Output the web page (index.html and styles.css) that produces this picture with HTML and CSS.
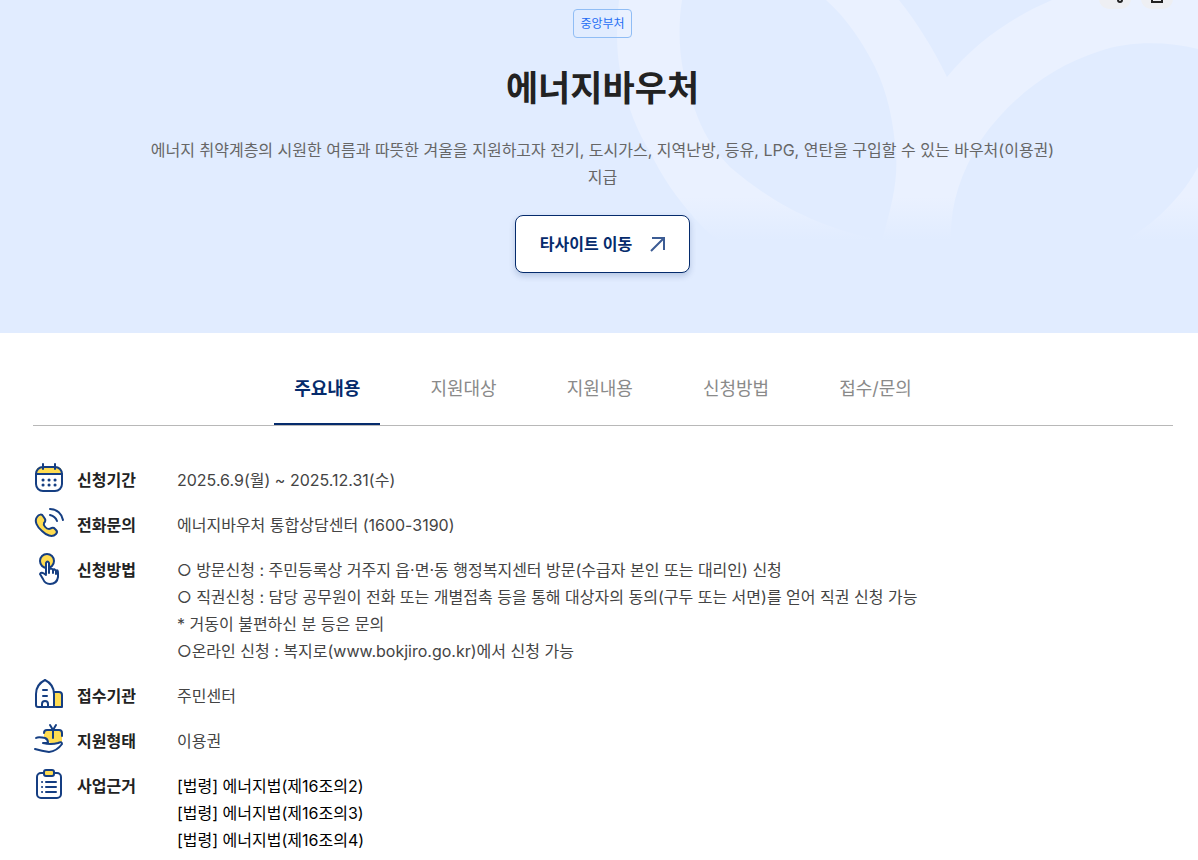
FILE: index.html
```html
<!DOCTYPE html>
<html lang="ko">
<head>
  <meta charset="UTF-8" />
  <meta name="viewport" content="width=device-width, initial-scale=1.0"/>
  <title>에너지바우처</title>
  <link rel="stylesheet" href="styles.css">
</head>
<body>
  <header class="hero">
    <svg class="hero-pattern" viewBox="0 0 598 240" aria-hidden="true">
      <defs>
        <linearGradient id="fade" x1="0" y1="0" x2="0" y2="240" gradientUnits="userSpaceOnUse">
          <stop offset="0" stop-color="#eaf1ff"/>
          <stop offset="0.82" stop-color="#eaf1ff"/>
          <stop offset="1" stop-color="#e1ecff"/>
        </linearGradient>
      </defs>
      <path fill="url(#fade)" d="M19 0C16 32 16 58 23 83C28 108 37 131 50 152C61 175 76 197 92 215C100 225 109 234 118 240H282C220 229 172 203 130 167C111 147 102 130 95 110C81 77 76 38 82 0Z"/>
      <path fill="url(#fade)" d="M226 0H299C318 24 334 50 347 77C375 43 410 18 452 0H598V49C567 41 528 41 500 51C449 67 408 101 381 140C360 174 350 205 351 240H282C292 205 298 180 296 153C293 120 288 94 275 67C262 41 247 19 226 0Z"/>
      <path fill="url(#fade)" d="M598 167Q588 186 572 203Q552 225 526 240H598Z"/>
    </svg>

    <div class="hero-actions">
      <button type="button" aria-label="공유">
        <svg width="20" height="20" viewBox="0 0 20 20"><circle cx="15" cy="4" r="2"/><circle cx="4" cy="10" r="2"/><circle cx="15" cy="17" r="2"/><path d="M6 9L13 5M6 11L13 16"/></svg>
      </button>
      <button type="button" aria-label="인쇄">
        <svg width="20" height="20" viewBox="0 0 20 20"><path d="M5 6V2H15V6M5 14H2V6H18V14H15M5 11H15V19H5Z"/></svg>
      </button>
    </div>

    <span class="badge">중앙부처</span>
    <h1>에너지바우처</h1>
    <p class="desc">에너지 취약계층의 시원한 여름과 따뜻한 겨울을 지원하고자 전기, 도시가스, 지역난방, 등유, LPG, 연탄을 구입할 수 있는 바우처(이용권) 지급</p>
    <button type="button" class="btn-site">
      타사이트 이동
      <svg width="16" height="16" viewBox="0 0 16 16" aria-hidden="true"><path d="M2 2H14V14M14 2L1 15"/></svg>
    </button>
  </header>

  <main class="content">
    <nav class="tabs">
      <a href="#main" class="active">주요내용</a>
      <a href="#target">지원대상</a>
      <a href="#support">지원내용</a>
      <a href="#apply">신청방법</a>
      <a href="#contact">접수/문의</a>
    </nav>

    <dl class="info" id="main">
      <div class="row">
        <dt>
          <svg class="icon" viewBox="0 0 30 30" aria-hidden="true">
            <path class="fill" d="M2 11V9Q2 4 7 4H23Q28 4 28 9V11Z"/>
            <rect x="2" y="4" width="26" height="24" rx="7"/>
            <path d="M2 11H28M9 1V6M21 1V6"/>
            <path class="dots" d="M9 17H9.1M15 17H15.1M21 17H21.1M9 22H9.1M15 22H15.1M21 22H21.1"/>
          </svg>
          신청기간
        </dt>
        <dd>2025.6.9(월) ~ 2025.12.31(수)</dd>
      </div>
      <div class="row">
        <dt>
          <svg class="icon" viewBox="0 0 30 30" aria-hidden="true">
            <path class="fill line" d="M3 9C5 6 8 6 9 8L11 11C12 13 11 14 10 15C9 17 12 21 15 21C17 21 17 19 20 20L22 22C24 24 23 25 22 26C18 30 12 27 8 23C3 19 0 13 3 9Z"/>
            <path d="M16 1C23 1 28 6 29 12M16 7C20 8 22 10 23 13"/>
          </svg>
          전화문의
        </dt>
        <dd>에너지바우처 통합상담센터 (1600-3190)</dd>
      </div>
      <div class="row">
        <dt>
          <svg class="icon" viewBox="0 0 30 30" aria-hidden="true">
            <circle class="fill line" cx="13" cy="8" r="7"/>
            <path class="hand" d="M12 21V10Q13.5 7 15 10V17Q17 14 19 17Q20 15 22 18Q24 16 24 20V24Q23 31 16 31Q11 31 9 26L6 21Q7 18 12 22M15 16V20M19 17V20M22 18V21"/>
          </svg>
          신청방법
        </dt>
        <dd>
          ○ 방문신청 : 주민등록상 거주지 읍·면·동 행정복지센터 방문(수급자 본인 또는 대리인) 신청<br>
          ○ 직권신청 : 담당 공무원이 전화 또는 개별접촉 등을 통해 대상자의 동의(구두 또는 서면)를 얻어 직권 신청 가능<br>
          * 거동이 불편하신 분 등은 문의<br>
          ○온라인 신청 : 복지로(www.bokjiro.go.kr)에서 신청 가능
        </dd>
      </div>
      <div class="row">
        <dt>
          <svg class="icon" viewBox="0 0 30 30" aria-hidden="true">
            <path class="fill line" d="M19 13H25Q28 13 28 16V28H19Z"/>
            <path class="paper" d="M4 28Q2 28 2 26V15C2 8 5 4 11 1C17 4 20 8 20 15V28Z"/>
            <path d="M8 28V25C8 21 14 21 14 25V28M9 11H13M9 17H13"/>
          </svg>
          접수기관
        </dt>
        <dd>주민센터</dd>
      </div>
      <div class="row">
        <dt>
          <svg class="icon" viewBox="0 0 30 30" aria-hidden="true">
            <path class="fill" d="M10 6H26Q28 6 28 8V18L18 20L10 15Z"/>
            <path d="M10 9Q10 6 13 6H25Q28 6 28 9V12M19 6V14M16 1L19 6L22 1"/>
            <path class="paper" d="M2 14C5 12 8 14 11 14Q14 15 14 19H9Q17 21 24 19Q28 17 28 20Q23 27 15 28Q8 27 1 25"/>
          </svg>
          지원형태
        </dt>
        <dd>이용권</dd>
      </div>
      <div class="row">
        <dt>
          <svg class="icon" viewBox="0 0 30 30" aria-hidden="true">
            <rect x="3" y="4" width="24" height="25" rx="4"/>
            <rect class="fill line" x="10" y="1" width="10" height="6" rx="2"/>
            <path d="M8 13H8.1M8 18H8.1M8 23H8.1M12 13H22M12 18H22M12 23H22"/>
          </svg>
          사업근거
        </dt>
        <dd class="law">
          [법령] 에너지법(제16조의2)<br>
          [법령] 에너지법(제16조의3)<br>
          [법령] 에너지법(제16조의4)
        </dd>
      </div>
    </dl>
  </main>
</body>
</html>
```
FILE: styles.css
```css
* {
  box-sizing: border-box;
}
body {
  margin: 0;
  font-family: Inter, "Noto Sans CJK KR", sans-serif;
  font-size: 16px;
  line-height: 27px;
  color: #444;
  background: #fff;
  word-break: keep-all;
}
button {
  font: inherit;
  cursor: pointer;
}
svg {
  fill: none;
  stroke-linecap: round;
  stroke-linejoin: round;
}
.hero {
  position: relative;
  display: flex;
  flex-direction: column;
  align-items: center;
  padding: 9px 26px 60px 33px;
  background: #e1ecff;
  text-align: center;
  overflow: hidden;
}
.hero > * {
  position: relative;
}
.hero .hero-pattern {
  position: absolute;
  top: 0;
  right: 0;
  width: 598px;
  height: 240px;
}
.hero .hero-actions {
  position: absolute;
  top: -23px;
  right: 25px;
  display: flex;
  gap: 10px;
}
.hero-actions button {
  display: flex;
  align-items: center;
  justify-content: center;
  width: 32px;
  height: 32px;
  padding: 0;
  border: none;
  border-radius: 10px;
  background: #eeeff3;
}
.hero-actions svg {
  stroke: #222;
  stroke-width: 2;
  stroke-linejoin: miter;
}
.badge {
  padding: 0 6px;
  border: 1px solid #90bdf5;
  border-radius: 4px;
  font-size: 12px;
  color: #256ef4;
}
h1 {
  margin: 25px 0 24px;
  font-size: 35px;
  line-height: 50px;
  font-weight: 700;
  color: #222;
}
.desc {
  max-width: 930px;
  margin: 0 0 24px;
  color: #666;
}
.btn-site {
  display: flex;
  align-items: center;
  gap: 18px;
  height: 58px;
  padding: 0 23px 0 24px;
  border: 1px solid #052b6c;
  border-radius: 8px;
  background: #fff;
  box-shadow: 0 3px 6px rgba(5, 43, 108, 0.2);
  font-weight: 600;
  color: #052b6c;
}
.btn-site svg {
  stroke: #3c5c94;
  stroke-width: 2;
  stroke-linecap: butt;
  stroke-linejoin: miter;
}
.content {
  padding: 18px 25px 0 33px;
}
.tabs {
  display: flex;
  justify-content: center;
  gap: 30px;
  border-bottom: 1px solid #b8b8b8;
}
.tabs a {
  padding: 24px 20px 21px;
  border-bottom: 2px solid transparent;
  font-size: 18px;
  color: #8a8a8a;
  text-decoration: none;
}
.tabs a.active {
  border-color: #052b6c;
  font-weight: 700;
  color: #052b6c;
}
.info {
  display: flex;
  flex-direction: column;
  gap: 18px;
  margin: 41px 0 0;
}
.row {
  display: flex;
}
dt {
  display: flex;
  align-items: flex-start;
  gap: 13px;
  flex: 0 0 144px;
  font-weight: 700;
  color: #222;
}
dd {
  margin: 0;
}
.law {
  color: #000;
}
.icon {
  width: 30px;
  height: 30px;
  margin: -4px 0 -3px 1px;
  stroke: #153e82;
  stroke-width: 2;
  overflow: visible;
}
.icon .fill {
  fill: #ffdc51;
  stroke: none;
}
.icon .line {
  stroke: #153e82;
}
.icon .paper,
.icon .hand {
  fill: #fff;
}
.icon .dots {
  stroke-width: 3;
}
```
